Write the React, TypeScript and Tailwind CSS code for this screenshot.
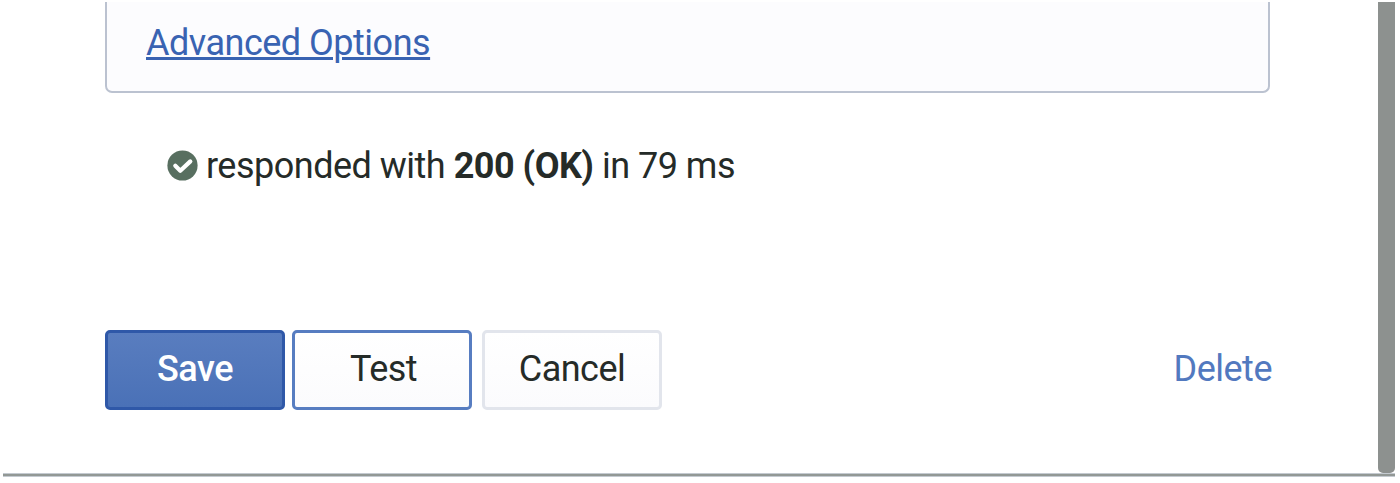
import type { ReactNode } from "react";

function ActionButton({ children, className }: { children: ReactNode; className: string }) {
  return (
    <button
      type="button"
      className={`flex h-20 w-[180px] items-center justify-center rounded-[5px] pb-[3px] ${className}`}
    >
      {children}
    </button>
  );
}

function SuccessIcon() {
  return (
    <svg viewBox="0 0 31 31" className="h-[31px] w-[31px] shrink-0" aria-hidden="true">
      <circle cx="15.5" cy="15.5" r="15.1" fill="#586f60" />
      <path
        d="M8.3 15.7 13.3 20.7 23.3 11.4"
        fill="none"
        stroke="#fff"
        strokeWidth="4.2"
        strokeLinecap="round"
        strokeLinejoin="round"
      />
    </svg>
  );
}

export default function App() {
  return (
    <div className="flex h-[483px] w-[1400px] flex-col overflow-hidden bg-white pt-[2px] pr-[5px] pl-[3px] font-['Roboto',sans-serif] text-[36px] leading-[42px] tracking-[-0.5px] text-[#252b28]">
      <div className="flex h-[471px] justify-between">
        <main className="ml-[102px] flex w-[1167px] flex-col">
          <section className="h-[91px] w-[1165px] rounded-b-[7px] border-2 border-t-0 border-[#bbc2d0] bg-[#fcfcfe] pt-[20px] pl-[39px]">
            <a
              href="#advanced"
              className="whitespace-nowrap text-[#3963b2] underline decoration-[3px] underline-offset-[2px]"
            >
              Advanced Options
            </a>
          </section>
          <p className="mt-[51px] ml-[62px] flex h-[42px] items-center gap-[8px] whitespace-nowrap">
            <SuccessIcon />
            <span className="pt-[2px]">
              responded with <strong className="font-bold">200 (OK)</strong> in 79 ms
            </span>
          </p>
          <div className="mt-[144px] flex items-center">
            <ActionButton className="border-[3px] border-[#2f58a8] bg-linear-to-b from-[#597dbf] to-[#4a71b7] font-medium text-white">
              Save
            </ActionButton>
            <ActionButton className="ml-[7px] border-[3px] border-[#577dc1] bg-linear-to-b from-white to-[#fbfbfd] pl-[3px]">
              Test
            </ActionButton>
            <ActionButton className="ml-[10px] border-[3px] border-[#e2e5ec] bg-linear-to-b from-white to-[#fbfbfd]">
              Cancel
            </ActionButton>
            <button type="button" className="ml-auto pb-[3px] text-[#5279bf]">
              Delete
            </button>
          </div>
        </main>
        <div className="w-[17px] rounded-b-[5px] bg-[#8d918f]" />
      </div>
      <div className="h-[4px] border-t border-b border-t-[#c4cad0] border-b-[#c4cad0] bg-[#929895]" />
    </div>
  );
}
